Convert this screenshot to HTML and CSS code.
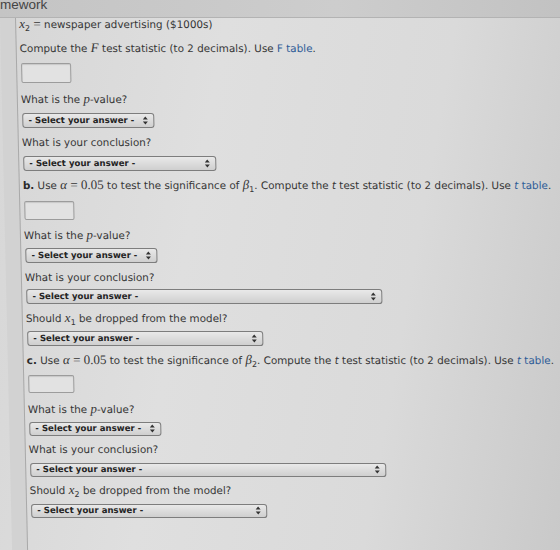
FILE: index.html
```html
<!DOCTYPE html>
<html lang="en">
<head>
    <meta charset="UTF-8">
    <meta name="viewport" content="width=device-width, initial-scale=1.0">
    <title>Homework</title>
    <link rel="stylesheet" href="styles.css">
</head>
<body>
    <div class="topbar"><span class="title">mework</span></div>
    <div class="page">
        <div class="gutter"></div>
        <div class="content">
            <div class="part part-a">
                <p class="line first"><var>x</var><sub>2</sub> <span class="mrm">=</span> newspaper advertising ($1000s)</p>
                <p class="line">Compute the <var>F</var> test statistic (to 2 decimals). Use <a href="#">F table</a>.</p>
                <input class="answer" type="text">
                <p class="line">What is the <var>p</var>-value?</p>
                <div class="select sm"><select><option>- Select your answer -</option></select><svg class="arrows" width="6" height="9" viewBox="0 0 6 9"><path d="M3 0.5 L5.5 3.5 H0.5 Z M3 8.5 L5.5 5.5 H0.5 Z" fill="#333"/></svg></div>
                <p class="line">What is your conclusion?</p>
                <div class="select md"><select><option>- Select your answer -</option></select><svg class="arrows" width="6" height="9" viewBox="0 0 6 9"><path d="M3 0.5 L5.5 3.5 H0.5 Z M3 8.5 L5.5 5.5 H0.5 Z" fill="#333"/></svg></div>
            </div>

            <div class="part part-b">
                <p class="line"><b>b.</b> Use <var>&alpha;</var> <span class="mrm">= 0.05</span> to test the significance of <var>&beta;</var><sub>1</sub>. Compute the <i>t</i> test statistic (to 2 decimals). Use <a href="#"><i>t</i> table</a>.</p>
                <input class="answer" type="text">
                <p class="line">What is the <var>p</var>-value?</p>
                <div class="select sm"><select><option>- Select your answer -</option></select><svg class="arrows" width="6" height="9" viewBox="0 0 6 9"><path d="M3 0.5 L5.5 3.5 H0.5 Z M3 8.5 L5.5 5.5 H0.5 Z" fill="#333"/></svg></div>
                <p class="line">What is your conclusion?</p>
                <div class="select lg"><select><option>- Select your answer -</option></select><svg class="arrows" width="6" height="9" viewBox="0 0 6 9"><path d="M3 0.5 L5.5 3.5 H0.5 Z M3 8.5 L5.5 5.5 H0.5 Z" fill="#333"/></svg></div>
                <p class="line">Should <var>x</var><sub>1</sub> be dropped from the model?</p>
                <div class="select wd"><select><option>- Select your answer -</option></select><svg class="arrows" width="6" height="9" viewBox="0 0 6 9"><path d="M3 0.5 L5.5 3.5 H0.5 Z M3 8.5 L5.5 5.5 H0.5 Z" fill="#333"/></svg></div>
            </div>

            <div class="part part-c">
                <p class="line"><b>c.</b> Use <var>&alpha;</var> <span class="mrm">= 0.05</span> to test the significance of <var>&beta;</var><sub>2</sub>. Compute the <i>t</i> test statistic (to 2 decimals). Use <a href="#"><i>t</i> table</a>.</p>
                <input class="answer" type="text">
                <p class="line">What is the <var>p</var>-value?</p>
                <div class="select sm"><select><option>- Select your answer -</option></select><svg class="arrows" width="6" height="9" viewBox="0 0 6 9"><path d="M3 0.5 L5.5 3.5 H0.5 Z M3 8.5 L5.5 5.5 H0.5 Z" fill="#333"/></svg></div>
                <p class="line">What is your conclusion?</p>
                <div class="select lg"><select><option>- Select your answer -</option></select><svg class="arrows" width="6" height="9" viewBox="0 0 6 9"><path d="M3 0.5 L5.5 3.5 H0.5 Z M3 8.5 L5.5 5.5 H0.5 Z" fill="#333"/></svg></div>
                <p class="line">Should <var>x</var><sub>2</sub> be dropped from the model?</p>
                <div class="select wd"><select><option>- Select your answer -</option></select><svg class="arrows" width="6" height="9" viewBox="0 0 6 9"><path d="M3 0.5 L5.5 3.5 H0.5 Z M3 8.5 L5.5 5.5 H0.5 Z" fill="#333"/></svg></div>
            </div>
        </div>
    </div>
</body>
</html>
```

FILE: styles.css
```css
body {
    margin: 0;
    height: 550px;
    overflow: hidden;
    font-family: "DejaVu Sans", Verdana, sans-serif;
    font-size: 10.4px;
    color: #363636;
    background: linear-gradient(100deg, #d6d6d6 0%, #dfdfdf 35%, #dadada 70%, #c9c9c9 100%);
}

.topbar {
    height: 17px;
    overflow: hidden;
    background: linear-gradient(90deg, #c4c4c4, #cdcdcd 60%, #c2c2c2);
    border-bottom: 1px solid #b3b3b3;
}

.title {
    display: block;
    margin-top: -2px;
    font-family: "Liberation Sans", Arial, sans-serif;
    font-size: 13.5px;
    line-height: 14px;
    color: #444;
}

.page {
    display: flex;
    height: 540px;
    transform: skewX(1.3deg);
    transform-origin: top left;
}

.gutter {
    width: 15px;
    flex-shrink: 0;
    background: #d2d2d2;
    border-right: 1px solid #a9a9a9;
}

.content {
    flex: 1;
    display: flex;
    flex-direction: column;
    gap: 7px;
    padding-left: 3px;
}

.part {
    display: flex;
    flex-direction: column;
    align-items: flex-start;
    gap: 7px;
}

.part-b {
    gap: 6.7px;
}

.part-b .select {
    margin-top: -1px;
}

.part-c {
    gap: 6.4px;
}

.part-c .select {
    height: 14px;
}

.line {
    margin: 0;
    height: 14px;
    line-height: 14px;
    white-space: nowrap;
}

.line.first {
    margin-top: -1px;
    margin-bottom: 3px;
}

var {
    font-family: "Liberation Serif", "Times New Roman", serif;
    font-style: italic;
    font-size: 13px;
}

.mrm {
    font-family: "Liberation Serif", "Times New Roman", serif;
    font-size: 13px;
}

sub {
    font-size: 8px;
    line-height: 0;
}

b {
    color: #2a2a2a;
}

a {
    color: #2f5c97;
    text-decoration: none;
}

.answer {
    width: 50px;
    height: 19px;
    margin: 2px 0 2px 1px;
    padding: 0;
    box-sizing: border-box;
    border: 1px solid #9c9c9c;
    border-radius: 2px;
    background: #e2e2e2;
    box-shadow: inset 0 1px 1px rgba(0, 0, 0, 0.12);
}

.part-a .answer {
    height: 20px;
    margin-top: 1px;
}

.part-c .answer {
    width: 46px;
    height: 18px;
}

.select {
    display: flex;
    align-items: center;
    height: 15px;
    box-sizing: border-box;
    border: 1px solid #7d7d7d;
    border-radius: 3px;
    background: linear-gradient(#e9e9e9, #cfcfcf);
    margin-left: 1px;
}

.select select {
    flex: 1;
    appearance: none;
    -webkit-appearance: none;
    border: none;
    background: transparent;
    padding: 0 0 0 5px;
    font-family: "DejaVu Sans", Verdana, sans-serif;
    font-size: 8.6px;
    font-weight: bold;
    color: #242424;
    height: 13px;
    line-height: 13px;
}

.arrows {
    margin-right: 5px;
    flex-shrink: 0;
}

.sm { width: 132px; }
.md { width: 193px; }
.lg { width: 356px; }
.wd { width: 236px; }
```
